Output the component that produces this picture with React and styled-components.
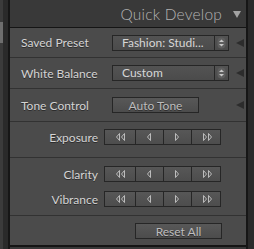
import React from 'react';
import styled, { createGlobalStyle } from 'styled-components';

const Global = createGlobalStyle`
    html, body {
        margin: 0;
        padding: 0;
        background: #2a2a2a;
    }
    body {
        font-family: Lato, "Open Sans", sans-serif;
    }
`;

const Page = styled.div`
    display: flex;
    width: 254px;
    height: 249px;
    background: #2a2a2a;
    overflow: hidden;
`;

const ScrollTrack = styled.div`
    width: 3px;
    background: #3b3b3b;
    margin-right: 5px;
`;

const Thumb = styled.div`
    margin-top: 22px;
    height: 21px;
    background: #6e6e6e;
`;

const Frame = styled.div`
    width: 240px;
    box-sizing: border-box;
    border-left: 2px solid #161616;
    border-right: 2px solid #161616;
    background: #393939;
    display: flex;
    flex-direction: column;
`;

const Header = styled.div`
    height: 27px;
    display: flex;
    align-items: center;
    justify-content: flex-end;
    padding-right: 5px;
    gap: 11px;
`;

const Title = styled.span`
    font-size: 15.5px;
    font-weight: 300;
    color: #b3b3b3;
    letter-spacing: 0.2px;
`;

const Panel = styled.div`
    background: #4b4b4b;
    border-top: 1px solid #151515;
    border-bottom: 2px solid #151515;
`;

const Row = styled.div`
    display: grid;
    grid-template-columns: 84px 117px 8px;
    column-gap: 7px;
    align-items: center;
    padding-left: 11px;
    height: ${p => p.h}px;
    border-bottom: 1px solid #323232;
`;

const Label = styled.span`
    font-size: 12px;
    color: #d4d4d4;
    text-shadow: 0 1px 0 #2c2c2c;
    white-space: nowrap;
    text-align: ${p => (p.right ? 'right' : 'left')};
`;

const Select = styled.div`
    display: flex;
    height: 16px;
    box-sizing: border-box;
    border: 1px solid #262626;
    background: linear-gradient(#535353, #4b4b4b);
`;

const SelectText = styled.span`
    flex: 1;
    padding-left: 9px;
    font-size: 12px;
    line-height: 14px;
    color: #d6d6d6;
    white-space: nowrap;
    overflow: hidden;
`;

const Stepper = styled.div`
    width: 13px;
    border-left: 1px solid #262626;
    display: flex;
    align-items: center;
    justify-content: center;
`;

const Button = styled.div`
    height: 16px;
    width: ${p => p.w}px;
    box-sizing: border-box;
    border: 1px solid #262626;
    background: linear-gradient(#585858, #4c4c4c);
    display: flex;
    align-items: center;
    justify-content: center;
    font-size: 12px;
    color: #bdbdbd;
    text-shadow: 0 1px 0 #2e2e2e;
`;

const Section = styled.div`
    display: flex;
    flex-direction: column;
    gap: ${p => p.gap || 0}px;
    padding-top: ${p => p.top}px;
    height: ${p => p.h}px;
    box-sizing: border-box;
    border-bottom: ${p => (p.last ? 'none' : '1px solid #323232')};
`;

const SliderRow = styled.div`
    display: grid;
    grid-template-columns: 88px 117px;
    column-gap: 6px;
    align-items: center;
`;

const Group = styled.div`
    display: grid;
    grid-template-columns: 30px 28px 28px 31px;
    height: 16px;
    box-sizing: border-box;
    border: 1px solid #262626;
    background: linear-gradient(#575757, #4d4d4d);
`;

const Seg = styled.div`
    display: flex;
    align-items: center;
    justify-content: center;
    border-left: ${p => (p.first ? 'none' : '1px solid #262626')};
`;

const ResetWrap = styled.div`
    padding: 7px 0 0 125px;
`;

const Arrow = ({ dir, color = '#2c2c2c' }) => (
    <svg width="8" height="8" viewBox="0 0 8 8">
        {dir === 'down'
            ? <polygon points="0,1 8,1 4,8" fill={color} />
            : <polygon points="0,4 8,0 8,8" fill={color} />}
    </svg>
);

const UpDown = () => (
    <svg width="9" height="12" viewBox="0 0 9 12">
        <rect x="0.5" y="0.5" width="8" height="11" rx="4" fill="#5e5e5e" />
        <polygon points="4.5,2.5 7,5 2,5" fill="#c8c8c8" />
        <polygon points="4.5,9.5 7,7 2,7" fill="#c8c8c8" />
    </svg>
);

const Tri = ({ left, x }) => (
    left
        ? <polygon points={`${x + 3.5},0.5 ${x + 3.5},7.5 ${x + 0.5},4`} fill="none" stroke="#bcbcbc" strokeWidth="1" />
        : <polygon points={`${x + 0.5},0.5 ${x + 0.5},7.5 ${x + 3.5},4`} fill="none" stroke="#bcbcbc" strokeWidth="1" />
);

const StepIcon = ({ left, double }) => (
    <svg width={double ? 9 : 5} height="8" viewBox={`0 0 ${double ? 9 : 5} 8`}>
        <Tri left={left} x={0} />
        {double && <Tri left={left} x={5} />}
    </svg>
);

const Steps = () => (
    <Group>
        <Seg first><StepIcon left double /></Seg>
        <Seg><StepIcon left /></Seg>
        <Seg><StepIcon /></Seg>
        <Seg><StepIcon double /></Seg>
    </Group>
);

const App = () => {
    return (
        <>
            <Global />
            <Page>
                <ScrollTrack><Thumb /></ScrollTrack>
                <Frame>
                    <Header>
                        <Title>Quick Develop</Title>
                        <Arrow dir="down" color="#a3a3a3" />
                    </Header>
                    <Panel>
                        <Row h={29}>
                            <Label>Saved Preset</Label>
                            <Select>
                                <SelectText>Fashion: Studi...</SelectText>
                                <Stepper><UpDown /></Stepper>
                            </Select>
                            <Arrow />
                        </Row>
                        <Row h={30}>
                            <Label>White Balance</Label>
                            <Select>
                                <SelectText>Custom</SelectText>
                                <Stepper><UpDown /></Stepper>
                            </Select>
                            <Arrow />
                        </Row>
                        <Row h={32}>
                            <Label>Tone Control</Label>
                            <Button w={87}>Auto Tone</Button>
                            <Arrow />
                        </Row>
                        <Section top={7} h={36}>
                            <SliderRow>
                                <Label right>Exposure</Label>
                                <Steps />
                            </SliderRow>
                        </Section>
                        <Section top={8} gap={9} h={58}>
                            <SliderRow>
                                <Label right>Clarity</Label>
                                <Steps />
                            </SliderRow>
                            <SliderRow>
                                <Label right>Vibrance</Label>
                                <Steps />
                            </SliderRow>
                        </Section>
                        <Section last h={29}>
                            <ResetWrap>
                                <Button w={87}>Reset All</Button>
                            </ResetWrap>
                        </Section>
                    </Panel>
                </Frame>
            </Page>
        </>
    );
};

export default App;
